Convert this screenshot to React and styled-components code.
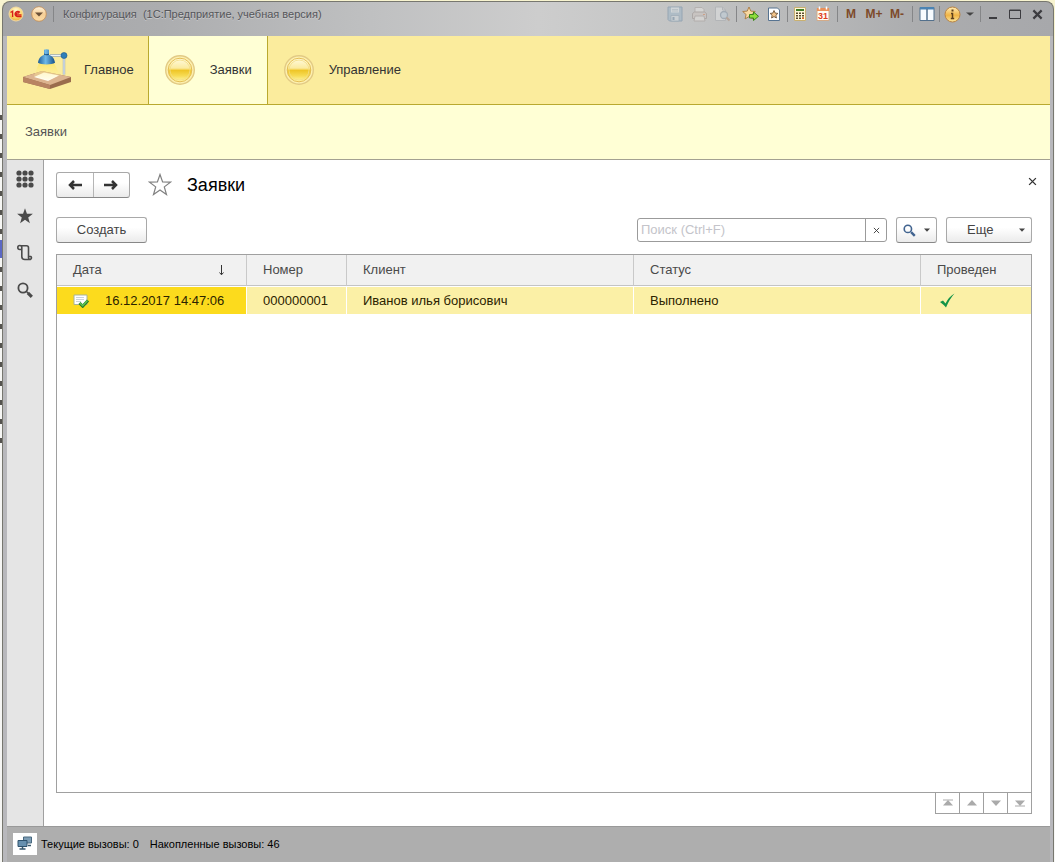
import React from 'react';
import styled, { createGlobalStyle, css } from 'styled-components';

const GlobalStyle = createGlobalStyle`
  * {
    box-sizing: border-box;
  }

  body {
    margin: 0;
    background: #f4f4ee;
    color: #333;
    font-family: 'Liberation Sans', Arial, sans-serif;
    font-size: 13px;
    line-height: 16px;
  }

  button,
  input {
    margin: 0;
    padding: 0;
    border: 0;
    background: none;
    color: inherit;
    font: inherit;
  }

  svg {
    display: block;
    flex: none;
  }
`;

const Desktop = styled.div`
  display: flex;
  min-height: 100vh;
  padding: 1px 1px 0 2px;
  background:
    linear-gradient(#5b67c4, #5b67c4) 0 240px / 2px 18px no-repeat,
    repeating-linear-gradient(#55534f 0 5px, transparent 5px 19px) 0 115px / 2px 330px no-repeat,
    linear-gradient(#f8f4d0 60px, #f6f6f4 60px);
`;

const Window = styled.div`
  flex: 1;
  display: flex;
  flex-direction: column;
  min-width: 0;
  padding: 0 3px 0 4px;
  border: 1px solid #77776f;
  border-bottom: 0;
  border-radius: 8px 8px 0 0;
  background:
    linear-gradient(90deg, #a4a5a8, #acadaf 15%, #bfc0c1 35%, #cdcdcd 51%, #c3c4c4 65%, #abacae 88%, #a7a8ab) 0 0 / 100% 34px no-repeat,
    #b8b8bc;
`;

const TitleBar = styled.header`
  display: flex;
  align-items: center;
  justify-content: space-between;
  height: 34px;
  padding: 0 3px 10px 1px;
`;

const TitleGroup = styled.div`
  display: flex;
  align-items: center;
  gap: ${(p) => p.$gap || 0}px;
`;

const TitleText = styled.span`
  margin-left: 3px;
  color: #55565a;
  font-size: 11px;
  text-shadow: 0 1px 0 #c8c8ca;
  white-space: pre;
`;

const Separator = styled.span`
  width: 1px;
  height: 16px;
  margin: 0 ${(p) => p.$space || 4}px;
  background: #858688;
`;

const ToolButton = styled.button`
  display: flex;
  align-items: center;
  justify-content: center;
  width: ${(p) => p.$width || 24}px;
  height: 18px;
  color: ${(p) => p.$color || '#7d4a2a'};
  font-size: 12px;
  font-weight: bold;
  opacity: ${(p) => (p.disabled ? 0.4 : 1)};
`;

const Sections = styled.nav`
  display: flex;
  height: 69px;
  background: #fbec9d;
  border-bottom: 1px solid #b9a92f;
`;

const SectionLink = styled.a`
  display: flex;
  align-items: center;
  gap: ${(p) => (p.$wide ? 12 : 14)}px;
  height: 68px;
  padding: 0 ${(p) => (p.$wide ? 14 : 15)}px 0 15px;
  color: #333;
  text-decoration: none;

  ${(p) =>
    p.$active &&
    css`
      border: solid #b9a92f;
      border-width: 0 1px;
      background: #ffffd5;
    `}
`;

const SubMenu = styled.nav`
  display: flex;
  align-items: center;
  height: 55px;
  padding: 0 18px;
  border-bottom: 1px solid #a3a191;
  background: #ffffd5;

  a {
    color: #555;
    text-decoration: none;
  }
`;

const Workspace = styled.div`
  flex: 1;
  display: flex;
  background: #fff;
`;

const Sidebar = styled.aside`
  display: flex;
  flex-direction: column;
  align-items: center;
  gap: 13px;
  width: 37px;
  padding-top: 7px;
  border-right: 1px solid #a0a0a0;
  background: #e5e5e5;
`;

const SideButton = styled.button`
  display: flex;
  align-items: center;
  justify-content: center;
  width: 24px;
  height: 24px;
  color: #4a4a4a;
`;

const Content = styled.main`
  flex: 1;
  display: flex;
  flex-direction: column;
  min-width: 0;
  padding: 12px 18px 12px 12px;
`;

const PageHead = styled.div`
  display: flex;
  align-items: center;
  height: 26px;
`;

const buttonFace = css`
  border: 1px solid #a9a9a9;
  border-bottom-color: #888;
  border-radius: 3px;
  background: linear-gradient(#fff, #fff 40%, #ebebeb);
`;

const History = styled.div`
  display: flex;
  width: 74px;
  height: 26px;
  ${buttonFace}

  button {
    flex: 1;
    display: flex;
    align-items: center;
    justify-content: center;
  }

  button + button {
    border-left: 1px solid #b5b5b5;
  }
`;

const StarButton = styled.button`
  margin: 0 15px 0 18px;
`;

const Heading = styled.h1`
  flex: 1;
  margin: 0;
  color: #000;
  font-size: 18px;
  font-weight: normal;
  line-height: 24px;
`;

const CloseButton = styled.button`
  width: 16px;
  height: 16px;
  margin: 0 -8px 8px 0;
  display: flex;
  align-items: center;
  justify-content: center;
`;

const CommandBar = styled.div`
  display: flex;
  align-items: center;
  gap: 9px;
  height: 26px;
  margin: 19px 0 11px;
`;

const Button = styled.button`
  display: flex;
  align-items: center;
  justify-content: ${(p) => (p.$menu ? 'space-between' : 'center')};
  width: ${(p) => p.$width}px;
  height: 26px;
  padding: ${(p) => p.$padding || '0'};
  color: #444;
  ${buttonFace}
`;

const SearchBox = styled.div`
  display: flex;
  width: 250px;
  height: 24px;
  margin-left: auto;
  border: 1px solid #9b9b9b;
  border-radius: 3px;

  input {
    flex: 1;
    min-width: 0;
    padding: 0 3px;
    outline: 0;
  }

  input::placeholder {
    color: #c4c4ca;
    opacity: 1;
  }

  button {
    display: flex;
    align-items: center;
    justify-content: center;
    width: 21px;
    border-left: 1px solid #9b9b9b;
  }
`;

const ListFrame = styled.div`
  flex: 1;
  border: 1px solid #a0a0a0;
`;

const Table = styled.table`
  width: 100%;
  table-layout: fixed;
  border-collapse: separate;
  border-spacing: 0;
`;

const HeadCell = styled.th`
  width: ${(p) => (p.$width ? `${p.$width}px` : 'auto')};
  height: 31px;
  padding: 0 16px;
  border-right: 1px solid #c9c9c9;
  border-bottom: 1px solid #c4c4c4;
  background: #f1f1f1;
  color: #4a4a4a;
  font-weight: normal;
  text-align: left;

  &:last-child {
    border-right: 0;
  }
`;

const SortHead = styled.span`
  display: flex;
  align-items: center;
  justify-content: space-between;
  padding-right: 5px;
`;

const Cell = styled.td`
  height: 28px;
  padding: 0 16px;
  border: solid #fff;
  border-width: 1px 1px 0 0;
  background: ${(p) => (p.$current ? '#fcdb1d' : '#fbf0a6')};
  color: #2b2300;

  &:last-child {
    border-right: 0;
  }
`;

const DateValue = styled.span`
  display: flex;
  align-items: center;
  gap: 15px;
  white-space: nowrap;
`;

const Pager = styled.div`
  display: flex;
  align-self: flex-end;
  border: solid #a0a0a0;
  border-width: 0 1px 1px 0;

  button {
    display: flex;
    align-items: center;
    justify-content: center;
    width: 24px;
    height: 20px;
    border-left: 1px solid #a0a0a0;
  }
`;

const StatusBar = styled.footer`
  display: flex;
  align-items: center;
  gap: 11px;
  height: 36px;
  padding: 0 6px 2px;
  border-top: 1px solid #999;
  background: #aeaeae;
  color: #000;
  font-size: 11px;
`;

const StatusIcon = styled.span`
  display: flex;
  align-items: center;
  justify-content: center;
  width: 24px;
  height: 22px;
  margin-right: -7px;
  background: #fff;
`;

const LogoIcon = () => (
  <svg width="16" height="16" viewBox="0 0 16 16">
    <defs>
      <radialGradient id="logo" cx="50%" cy="25%" r="80%">
        <stop offset="0" stopColor="#fff8d0" />
        <stop offset="0.6" stopColor="#fbd665" />
        <stop offset="1" stopColor="#e8a53c" />
      </radialGradient>
    </defs>
    <circle cx="8" cy="8" r="7" fill="url(#logo)" stroke="#f2d9a4" />
    <path d="M2.500 6.500L4.600 5.200V11M11.800 6.500A2.600 2.600 0 1 0 9.500 10.600H13.500M10.600 7.700A1.100 1.100 0 1 0 9.700 9H13.500" fill="none" stroke="#d8201a" strokeWidth="1.400" />
  </svg>
);

const MenuCircleIcon = () => (
  <svg width="16" height="16" viewBox="0 0 16 16">
    <defs>
      <linearGradient id="menuCircle" x1="0" y1="0" x2="0" y2="1">
        <stop offset="0" stopColor="#fff3dc" />
        <stop offset="0.5" stopColor="#f6cf96" />
        <stop offset="1" stopColor="#fbdca6" />
      </linearGradient>
    </defs>
    <circle cx="8" cy="8" r="7.300" fill="url(#menuCircle)" stroke="#c38b53" strokeWidth="0.800" />
    <path d="M4 6.500h8l-4 4z" fill="#6b5138" />
  </svg>
);

const SaveIcon = () => (
  <svg width="16" height="16" viewBox="0 0 16 16">
    <path d="M1 1h14v14H2.500L1 13.500z" fill="#8fb0c8" stroke="#53789a" />
    <path d="M4 1.500h8v5H4z" fill="#e4eef5" />
    <path d="M5 3.500h6M5 5h6" stroke="#8ca6b9" strokeWidth="0.700" />
    <path d="M4 9.500h8V15H4z" fill="#d4e0e8" stroke="#6487a3" strokeWidth="0.700" />
    <path d="M5.500 11h2v3h-2z" fill="#53789a" />
  </svg>
);

const PrintIcon = () => (
  <svg width="17" height="16" viewBox="0 0 17 16">
    <path d="M4 7V1.500h7l2 2V7" fill="#f3f1ee" stroke="#a39a96" />
    <path d="M1.500 7.500l2-1.500h10l2 1.500v5h-14z" fill="#d3c6c0" stroke="#8d807b" />
    <path d="M4 10h9l1 5H3z" fill="#efece8" stroke="#9d918c" />
    <path d="M12 8.500h2" stroke="#e0702e" />
  </svg>
);

const PreviewIcon = () => (
  <svg width="17" height="16" viewBox="0 0 17 16">
    <path d="M1.500 1h7l3 3v10.500h-10z" fill="#eceef0" stroke="#9fa4aa" />
    <path d="M8.500 1v3h3" fill="none" stroke="#9fa4aa" />
    <circle cx="10" cy="9" r="3.500" fill="#c3d7e6" stroke="#768ca1" strokeWidth="1.300" />
    <path d="M12.500 11.500l3 3" stroke="#a87a5c" strokeWidth="2" />
  </svg>
);

const FavoriteAddIcon = () => (
  <svg width="18" height="16" viewBox="0 0 18 16">
    <path d="M7 1l1.800 4.100 4.500.4-3.400 3 1 4.400L7 10.600l-3.900 2.300 1-4.400-3.400-3 4.500-.4z" fill="#f8d9a2" stroke="#a87840" strokeWidth="0.900" />
    <path d="M7.500 8.500h4V6l5 4.300-5 4.200V12h-4z" fill="#8fdd3c" stroke="#3a841b" />
  </svg>
);

const FavoritesIcon = () => (
  <svg width="14" height="16" viewBox="0 0 14 16">
    <path d="M1.500 2h9l2 2v10.500h-11z" fill="#fff" stroke="#567391" />
    <path d="M7 4.500l1.200 2.600 2.700.3-2 1.900.5 2.700L7 10.600 4.600 12l.5-2.700-2-1.900 2.700-.3z" fill="#f3c489" stroke="#6b5035" strokeWidth="0.900" />
  </svg>
);

const CalculatorIcon = () => (
  <svg width="14" height="16" viewBox="0 0 14 16">
    <path d="M1.500 1.500h11v13h-11z" fill="#fff8d8" stroke="#c9b071" />
    <path d="M3 3h8v2H3z" fill="#3f7c27" />
    <path d="M3 7.200h8M3 9.700h8M3 12.200h8" stroke="#5b4a2c" strokeWidth="1.400" strokeDasharray="2 1" />
    <path d="M9 12.200h2" stroke="#e0651f" strokeWidth="1.400" />
  </svg>
);

const CalendarIcon = () => (
  <svg width="14" height="16" viewBox="0 0 14 16">
    <path d="M1 2.500h12v12H1z" fill="#fffdf5" stroke="#d3ab89" />
    <path d="M1 2h12v3H1z" fill="#e9905a" />
    <path d="M3.500 0.500v3M10.500 0.500v3" stroke="#fff" strokeWidth="1.500" />
    <text x="7" y="13" textAnchor="middle" fontFamily="Liberation Sans" fontSize="9" fontWeight="bold" fill="#df401d">31</text>
  </svg>
);

const PanelsIcon = () => (
  <svg width="16" height="16" viewBox="0 0 16 16">
    <path d="M1 1.500h14v13H1z" fill="#f7fbfe" stroke="#53708c" />
    <path d="M1 1h14v2.500H1z" fill="#4b83b3" />
    <path d="M8 3v11" stroke="#53708c" strokeWidth="1.500" />
  </svg>
);

const InfoIcon = () => (
  <svg width="17" height="17" viewBox="0 0 17 17">
    <defs>
      <linearGradient id="info" x1="0" y1="0" x2="0" y2="1">
        <stop offset="0" stopColor="#ffeeb9" />
        <stop offset="0.550" stopColor="#f0b445" />
        <stop offset="1" stopColor="#fce9a0" />
      </linearGradient>
    </defs>
    <circle cx="8.500" cy="8.500" r="7.500" fill="url(#info)" stroke="#b98343" />
    <path d="M8.500 3.500v2" stroke="#5d3f1b" strokeWidth="2" />
    <path d="M7 7.500h1.500v5M6.800 12.500h3.400" fill="none" stroke="#5d3f1b" strokeWidth="1.500" />
  </svg>
);

const LampIcon = () => (
  <svg width="50" height="42" viewBox="0 0 50 42">
    <defs>
      <linearGradient id="light" x1="0" y1="0" x2="0" y2="1">
        <stop offset="0" stopColor="#ffe24a" />
        <stop offset="1" stopColor="#fff7b8" stopOpacity="0.300" />
      </linearGradient>
      <linearGradient id="shade" x1="0" y1="0" x2="1" y2="0">
        <stop offset="0" stopColor="#1e5c96" />
        <stop offset="0.450" stopColor="#6fb9e8" />
        <stop offset="1" stopColor="#154f89" />
      </linearGradient>
    </defs>
    <path d="M1 28l19-6 29 6v5L28 40 1 33z" fill="#9a6c4d" />
    <path d="M1 28l19-6 29 6-21 8z" fill="#dcb48f" />
    <path d="M1 28l27 8v4L1 33z" fill="#b88462" />
    <path d="M12 28l10-4.500 15 3-11 5.500z" fill="#fffdf2" />
    <path d="M17 14h15l6 12-12 5-14-4z" fill="url(#light)" opacity="0.600" />
    <path d="M28 6.500h14v19" fill="none" stroke="#9aabb9" strokeWidth="2.400" />
    <path d="M28 6.500h14v19" fill="none" stroke="#edf3f8" strokeWidth="1" />
    <circle cx="42" cy="6.500" r="3" fill="#2f7fb9" stroke="#1a5688" strokeWidth="0.600" />
    <path d="M22 0.800c1-.8 4-.8 5 0v5c4 1.500 5.500 4.500 6 8-3 2.200-14 2.200-17 0 .5-3.500 2-6.500 6-8z" fill="url(#shade)" />
    <path d="M22 5c2 1 4 1 5 0" fill="none" stroke="#134777" />
  </svg>
);

const CoinIcon = () => (
  <svg width="32" height="32" viewBox="0 0 32 32">
    <defs>
      <linearGradient id="coin" x1="0" y1="0" x2="0" y2="1">
        <stop offset="0" stopColor="#fffbe0" />
        <stop offset="0.420" stopColor="#fbeba0" />
        <stop offset="0.520" stopColor="#efc627" />
        <stop offset="0.750" stopColor="#f7dc55" />
        <stop offset="1" stopColor="#fff9b0" />
      </linearGradient>
    </defs>
    <circle cx="16" cy="16" r="14.300" fill="#fdf0b0" stroke="#e2ca85" strokeWidth="1.400" />
    <circle cx="16" cy="16" r="11.800" fill="url(#coin)" stroke="#e3bd55" strokeWidth="1" />
    <circle cx="16" cy="16" r="10" fill="none" stroke="#f3dd84" strokeWidth="0.800" />
  </svg>
);

const GridIcon = () => (
  <svg width="18" height="18" viewBox="0 0 18 18" fill="currentColor">
    {[3, 9, 15].map((y) => [3, 9, 15].map((x) => <circle key={`${x}-${y}`} cx={x} cy={y} r="2.600" />))}
  </svg>
);

const StarIcon = ({ size, ...rest }) => (
  <svg width={size} height={size} viewBox="0 0 24 24" {...rest}>
    <path d="M12 1.500l2.600 7.400 7.900.2-6.200 4.800 2.200 7.600-6.500-4.500-6.500 4.500 2.200-7.600-6.200-4.800 7.900-.2z" />
  </svg>
);

const ScrollIcon = () => (
  <svg width="18" height="18" viewBox="0 0 18 18" fill="none" stroke="currentColor" strokeWidth="1.600">
    <path d="M5.500 5.500H3.800a2 2 0 1 1 2-2V12.500q0 3 3 3h6M4 1.700h6.500q2 0 2 2v8.800M12.500 12.500h2.200a1.500 1.500 0 1 1-2.200 1.500z" />
  </svg>
);

const LensIcon = ({ size }) => (
  <svg width={size} height={size} viewBox="0 0 16 16" fill="none" stroke="currentColor">
    <circle cx="6" cy="6" r="4.600" strokeWidth="1.800" />
    <path d="M9.500 9.500l1.500 1.500" strokeWidth="1.500" />
    <path d="M10.800 10.800l4 4" strokeWidth="3.200" />
  </svg>
);

const ArrowIcon = ({ right }) => (
  <svg width="16" height="12" viewBox="0 0 16 12" fill="none" stroke="#333" strokeWidth="2.500">
    <path d={right ? 'M1 6h12M9 2l4 4-4 4' : 'M15 6H3M7 2L3 6l4 4'} />
  </svg>
);

const CrossIcon = ({ size = 8, width = 1.5 }) => (
  <svg width={size} height={size} viewBox="0 0 8 8" stroke="currentColor" strokeWidth={width}>
    <path d="M1 1l6 6M7 1L1 7" />
  </svg>
);

const CaretIcon = ({ size = 6 }) => (
  <svg width={size} height="4" viewBox="0 0 6 4" preserveAspectRatio="none">
    <path d="M0 0.500h6L3 3.800z" fill="#444" />
  </svg>
);

const SortIcon = () => (
  <svg width="7" height="11" viewBox="0 0 7 11" fill="none" stroke="#333">
    <path d="M3.500 0v9.500M1.500 7.500l2 2.300 2-2.300" />
  </svg>
);

const DocumentIcon = () => (
  <svg width="17" height="14" viewBox="0 0 17 14">
    <path d="M1 1h13v9.500H1z" fill="#fff" stroke="#a8b39a" />
    <path d="M3 3.500h8M3 5.500h8M3 7.500h5" stroke="#bcc8cf" strokeWidth="0.800" />
    <path d="M6.500 9l3.200 3.200L15 6.500" fill="none" stroke="#267d27" strokeWidth="3" />
    <path d="M6.800 9l2.900 2.600 4.800-5" fill="none" stroke="#5fc153" strokeWidth="1.500" />
  </svg>
);

const CheckIcon = () => (
  <svg width="18" height="16" viewBox="0 0 18 16" role="img" aria-label="Да">
    <path d="M3 9l3-1.500 2.500 3Q11.500 4 17.500 0.500 12.500 6 9 14.500 6.500 11.500 3 9z" fill="#129348" />
  </svg>
);

const PagerIcon = ({ down, bar }) => (
  <svg width="12" height="8" viewBox="0 0 12 8" fill="#aaa">
    <g transform={down ? 'rotate(180 6 4)' : undefined}>
      <path d="M6 1L11 6.500H1z" />
      {bar && <path d="M1 0.500h10v1H1z" />}
    </g>
  </svg>
);

const ServersIcon = () => (
  <svg width="16" height="15" viewBox="0 0 16 15">
    <path d="M6.500 1h8v6h-8z" fill="#7d9db5" stroke="#48687f" />
    <path d="M1 4.500h9v6H1z" fill="#6790af" stroke="#2e526d" />
    <path d="M2.500 13h6M5.500 11v2M11 9.500h3" stroke="#37576d" strokeWidth="1.500" />
  </svg>
);

const columns = [
  { title: 'Дата', width: 190, sorted: true },
  { title: 'Номер', width: 100 },
  { title: 'Клиент' },
  { title: 'Статус' },
  { title: 'Проведен', width: 110 },
];

const orders = [
  {
    date: '16.12.2017 14:47:06',
    number: '000000001',
    client: 'Иванов илья борисович',
    status: 'Выполнено',
    posted: true,
  },
];

function WindowTitle() {
  return (
    <TitleBar>
      <TitleGroup>
        <TitleGroup $gap={7}>
          <LogoIcon />
          <ToolButton $width={16} aria-label="Главное меню"><MenuCircleIcon /></ToolButton>
        </TitleGroup>
        <Separator $space={6} />
        <TitleText>Конфигурация  (1С:Предприятие, учебная версия)</TitleText>
      </TitleGroup>
      <TitleGroup>
        <ToolButton disabled aria-label="Сохранить"><SaveIcon /></ToolButton>
        <ToolButton disabled aria-label="Печать"><PrintIcon /></ToolButton>
        <ToolButton disabled $width={22} aria-label="Просмотр"><PreviewIcon /></ToolButton>
        <Separator $space={3} />
        <ToolButton $width={22} aria-label="Добавить в избранное"><FavoriteAddIcon /></ToolButton>
        <ToolButton aria-label="Избранное"><FavoritesIcon /></ToolButton>
        <Separator $space={1} />
        <ToolButton $width={22} aria-label="Калькулятор"><CalculatorIcon /></ToolButton>
        <ToolButton aria-label="Календарь"><CalendarIcon /></ToolButton>
        <Separator $space={2} />
        <ToolButton $width={22}>M</ToolButton>
        <ToolButton>M+</ToolButton>
        <ToolButton $width={22}>M-</ToolButton>
        <Separator />
        <ToolButton $width={20} aria-label="Панели"><PanelsIcon /></ToolButton>
        <Separator $space={2} />
        <ToolButton $width={20} aria-label="О программе"><InfoIcon /></ToolButton>
        <ToolButton $width={16} aria-label="Ещё"><CaretIcon size={8} /></ToolButton>
        <Separator $space={2} />
        <ToolButton $width={20} $color="#3c3c40" aria-label="Свернуть">
          <svg width="8" height="10" viewBox="0 0 8 10"><path d="M0 8h8v2H0z" fill="currentColor" /></svg>
        </ToolButton>
        <ToolButton $color="#3c3c40" aria-label="Развернуть">
          <svg width="12" height="10" viewBox="0 0 12 10"><path d="M0.500 1h11v8.500H0.500zM0.500 1.500h11" fill="none" stroke="currentColor" /></svg>
        </ToolButton>
        <ToolButton $width={20} $color="#3c3c40" aria-label="Закрыть"><CrossIcon size={11} width={1.6} /></ToolButton>
      </TitleGroup>
    </TitleBar>
  );
}

function OrdersTable() {
  return (
    <Table>
      <thead>
        <tr>
          {columns.map((col) => (
            <HeadCell key={col.title} $width={col.width}>
              {col.sorted ? <SortHead>{col.title}<SortIcon /></SortHead> : col.title}
            </HeadCell>
          ))}
        </tr>
      </thead>
      <tbody>
        {orders.map((order) => (
          <tr key={order.number}>
            <Cell $current><DateValue><DocumentIcon />{order.date}</DateValue></Cell>
            <Cell>{order.number}</Cell>
            <Cell>{order.client}</Cell>
            <Cell>{order.status}</Cell>
            <Cell>{order.posted && <CheckIcon />}</Cell>
          </tr>
        ))}
      </tbody>
    </Table>
  );
}

export default function App() {
  return (
    <>
      <GlobalStyle />
      <Desktop>
        <Window>
          <WindowTitle />
          <Sections>
            <SectionLink href="#main" $wide><LampIcon />Главное</SectionLink>
            <SectionLink href="#orders" $active><CoinIcon />Заявки</SectionLink>
            <SectionLink href="#manage"><CoinIcon />Управление</SectionLink>
          </Sections>
          <SubMenu><a href="#orders-list">Заявки</a></SubMenu>
          <Workspace>
            <Sidebar>
              <SideButton aria-label="Меню функций"><GridIcon /></SideButton>
              <SideButton aria-label="Избранное"><StarIcon size={18} fill="currentColor" /></SideButton>
              <SideButton aria-label="История"><ScrollIcon /></SideButton>
              <SideButton aria-label="Поиск"><LensIcon size={16} /></SideButton>
            </Sidebar>
            <Content>
              <PageHead>
                <History>
                  <button aria-label="Назад"><ArrowIcon /></button>
                  <button aria-label="Вперед"><ArrowIcon right /></button>
                </History>
                <StarButton aria-label="В избранное">
                  <StarIcon size={24} fill="none" stroke="#808080" strokeWidth="1.200" />
                </StarButton>
                <Heading>Заявки</Heading>
                <CloseButton aria-label="Закрыть форму"><CrossIcon size={9} width={1.2} /></CloseButton>
              </PageHead>
              <CommandBar>
                <Button $width={91}>Создать</Button>
                <SearchBox>
                  <input type="text" placeholder="Поиск (Ctrl+F)" aria-label="Поиск" />
                  <button aria-label="Очистить"><CrossIcon size={7} width={1} /></button>
                </SearchBox>
                <Button $menu $width={41} $padding="0 6px" aria-label="Найти">
                  <svg width="13" height="13" viewBox="0 0 16 16" fill="none" stroke="#426490">
                    <circle cx="6" cy="6" r="4.500" strokeWidth="2" />
                    <path d="M10 10l4.500 4.500" strokeWidth="3" />
                  </svg>
                  <CaretIcon />
                </Button>
                <Button $menu $width={86} $padding="0 6px 0 20px">Еще<CaretIcon /></Button>
              </CommandBar>
              <ListFrame><OrdersTable /></ListFrame>
              <Pager>
                <button aria-label="В начало"><PagerIcon bar /></button>
                <button aria-label="Вверх"><PagerIcon /></button>
                <button aria-label="Вниз"><PagerIcon down /></button>
                <button aria-label="В конец"><PagerIcon down bar /></button>
              </Pager>
            </Content>
          </Workspace>
          <StatusBar>
            <StatusIcon><ServersIcon /></StatusIcon>
            <span>Текущие вызовы: 0</span>
            <span>Накопленные вызовы: 46</span>
          </StatusBar>
        </Window>
      </Desktop>
    </>
  );
}
